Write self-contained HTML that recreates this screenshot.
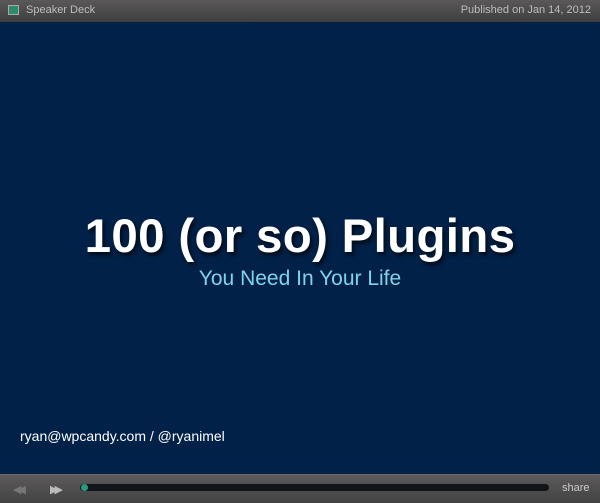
<!DOCTYPE html>
<html><head><style>
body{margin:0;width:600px;height:503px;overflow:hidden;background:#000;font-family:"Liberation Sans",sans-serif;}
.top{position:absolute;left:0;top:0;width:600px;height:22px;background:linear-gradient(#5a5858,#3f3e3e);color:#bdbdbd;font-size:11px;}
.slide{position:absolute;left:0;top:22px;width:600px;height:452px;background:#012148;}
.bot{position:absolute;left:0;top:474px;width:600px;height:29px;background:linear-gradient(#5c5a5a,#434242);border-top:1px solid #6a6868;box-sizing:border-box;}
.t1{position:absolute;left:0;width:600px;text-align:center;top:209px;font-size:47.5px;font-weight:bold;color:#fff;text-shadow:2px 3px 4px rgba(0,0,0,.7);letter-spacing:0.3px}
.t2{position:absolute;left:0;width:600px;text-align:center;top:267px;font-size:21px;color:#7fd4ea;}
.ft{position:absolute;left:20px;top:428px;font-size:14px;color:#fff;}
</style></head><body>
<div class="top">
<div style="position:absolute;left:8px;top:5px;width:11px;height:10px;background:#2d8a6a;border:1px solid #aaa;box-sizing:border-box"></div>
<div style="position:absolute;left:26px;top:4px">Speaker Deck</div>
<div style="position:absolute;right:9px;top:4px">Published on Jan 14, 2012</div>
</div>
<div class="slide"></div>
<div class="t1">100 (or so) Plugins</div>
<div class="t2">You Need In Your Life</div>
<div class="ft">ryan@wpcandy.com / @ryanimel</div>
<div class="bot">
<div style="position:absolute;left:13px;top:8px;color:#777;font-size:11px;letter-spacing:-4px">◀◀</div>
<div style="position:absolute;left:50px;top:8px;color:#bbb;font-size:11px;letter-spacing:-4px">▶▶</div>
<div style="position:absolute;left:80px;top:9px;width:469px;height:7px;border-radius:4px;background:#111418"></div>
<div style="position:absolute;left:81px;top:9px;width:7px;height:7px;border-radius:50%;background:#2a9a82"></div>
<div style="position:absolute;left:562px;top:7px;color:#ccc;font-size:11px">share</div>
</div>
</body></html>
